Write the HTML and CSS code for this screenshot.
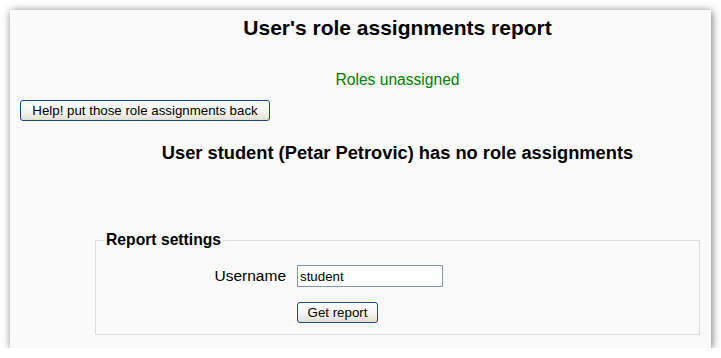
FILE: index.html
```html
<!DOCTYPE html>
<html lang="en">
<head>
  <meta charset="UTF-8" />
  <title>User's role assignments report</title>
  <link rel="stylesheet" href="styles.css">
</head>
<body>
  <div class="panel">
    <div class="centered">
      <h2 class="main-heading">User's role assignments report</h2>
      <div class="notify-success">Roles unassigned</div>
    </div>

    <form class="undo-form">
      <button type="button" class="xp-btn help-btn">Help! put those role assignments back</button>
    </form>

    <div class="centered">
      <h3 class="no-roles">User student (Petar Petrovic) has no role assignments</h3>

      <fieldset class="settings">
        <legend>Report settings</legend>
        <div class="fitem">
          <label for="username">Username</label>
          <input type="text" id="username" value="student">
        </div>
        <div class="fitem">
          <span></span>
          <div><button type="button" class="xp-btn">Get report</button></div>
        </div>
      </fieldset>
    </div>
  </div>
</body>
</html>
```

FILE: styles.css
```css
body {
  margin: 0;
  background-color: #fff;
  font-family: "Liberation Sans", Arial, sans-serif;
  color: #000;
}

.panel {
  margin: 10px 0 0 10px;
  width: 701px;
  height: 338px;
  background-color: #fafafa;
  box-shadow: 1px 1px 8px rgba(0, 0, 0, 0.55);
  padding-top: 6px;
  box-sizing: border-box;
}

.centered {
  margin-left: 74px;
  text-align: center;
}

.main-heading {
  font-size: 21px;
  line-height: 24px;
  margin: 0;
}

.notify-success {
  color: #008000;
  font-size: 15.6px;
  line-height: 18px;
  margin-top: 31px;
}

.undo-form {
  margin: 11px 0 0 10px;
}

.xp-btn {
  font-family: "Liberation Sans", Arial, sans-serif;
  font-size: 13.3px;
  color: #000;
  height: 21px;
  padding: 0 8px;
  border: 1px solid #1c4a80;
  border-radius: 3px;
  background: linear-gradient(#ffffff, #f4f3ee 60%, #e2dfd4);
  cursor: pointer;
}

.help-btn {
  width: 250px;
}

.no-roles {
  font-size: 18.3px;
  line-height: 20px;
  margin: 22px 0 0;
}

.settings {
  margin: 68px 11px 0 11px;
  border: 1px solid #dddddd;
  padding: 0 0 11px 0;
  text-align: left;
}

.settings legend {
  font-size: 15.7px;
  font-weight: bold;
  padding: 0 2px;
  margin-left: 8px;
}

.fitem {
  display: grid;
  grid-template-columns: 190px 1fr;
  column-gap: 11px;
  align-items: center;
  margin-top: 16px;
}

.fitem + .fitem {
  margin-top: 15px;
}

.fitem label {
  text-align: right;
  font-size: 15.5px;
}

.fitem input {
  width: 146px;
  height: 22px;
  box-sizing: border-box;
  border: 1px solid #7f9db9;
  background: #fff;
  font-family: "Liberation Sans", Arial, sans-serif;
  font-size: 13.3px;
  padding: 1px 2px;
}

.fitem .xp-btn {
  width: 81px;
  padding: 0;
}
```
